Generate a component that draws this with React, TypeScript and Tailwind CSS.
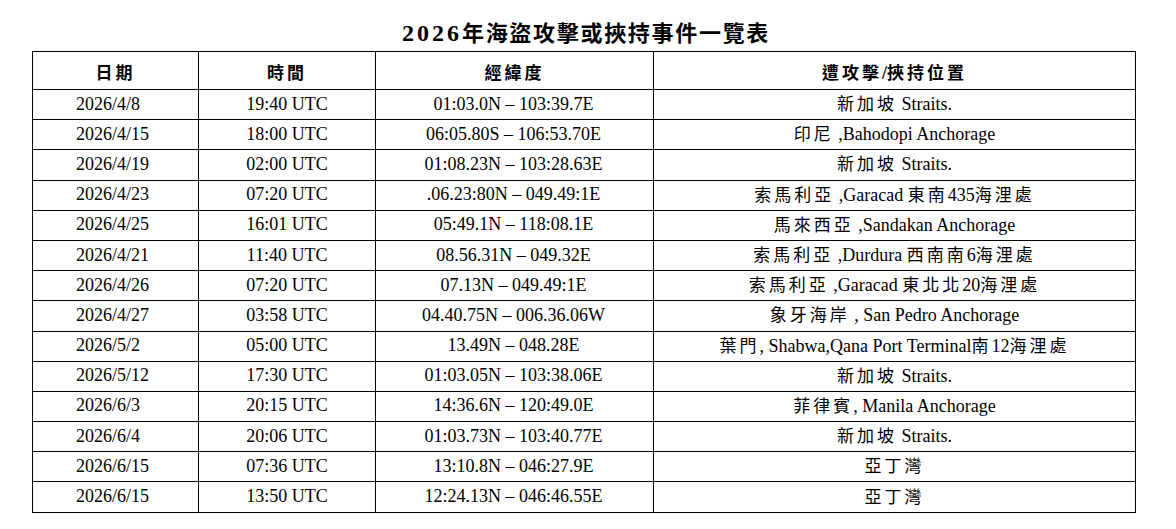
import React from "react";

const rows: [string, string, string, string][] = [
  ["2026/4/8", "19:40 UTC", "01:03.0N – 103:39.7E", "新加坡 Straits."],
  ["2026/4/15", "18:00 UTC", "06:05.80S – 106:53.70E", "印尼 ,Bahodopi Anchorage"],
  ["2026/4/19", "02:00 UTC", "01:08.23N – 103:28.63E", "新加坡 Straits."],
  ["2026/4/23", "07:20 UTC", ".06.23:80N – 049.49:1E", "索馬利亞 ,Garacad 東南435海浬處"],
  ["2026/4/25", "16:01 UTC", "05:49.1N – 118:08.1E", "馬來西亞 ,Sandakan Anchorage"],
  ["2026/4/21", "11:40 UTC", "08.56.31N – 049.32E", "索馬利亞 ,Durdura 西南南6海浬處"],
  ["2026/4/26", "07:20 UTC", "07.13N – 049.49:1E", "索馬利亞 ,Garacad 東北北20海浬處"],
  ["2026/4/27", "03:58 UTC", "04.40.75N – 006.36.06W", "象牙海岸 , San Pedro Anchorage"],
  ["2026/5/2", "05:00 UTC", "13.49N – 048.28E", "葉門, Shabwa,Qana Port Terminal南12海浬處"],
  ["2026/5/12", "17:30 UTC", "01:03.05N – 103:38.06E", "新加坡 Straits."],
  ["2026/6/3", "20:15 UTC", "14:36.6N – 120:49.0E", "菲律賓, Manila Anchorage"],
  ["2026/6/4", "20:06 UTC", "01:03.73N – 103:40.77E", "新加坡 Straits."],
  ["2026/6/15", "07:36 UTC", "13:10.8N – 046:27.9E", "亞丁灣"],
  ["2026/6/15", "13:50 UTC", "12:24.13N – 046:46.55E", "亞丁灣"],
];

const serif = "font-['Liberation_Serif','Noto_Sans_CJK_TC',serif]";

function Mixed({ text, bold = false }: { text: string; bold?: boolean }) {
  const parts = text.split(/([\u3400-\u9fff\uf900-\ufaff]+)/);
  return (
    <span className="whitespace-pre">
      {parts.map((p, i) =>
        i % 2 === 1 ? (
          <span
            key={i}
            className={
              bold
                ? "font-['Noto_Sans_CJK_TC',sans-serif] text-[17px] font-bold tracking-[3px]"
                : "font-['Noto_Sans_CJK_TC',sans-serif] text-[17px] font-normal tracking-[3px]"
            }
          >
            {p}
          </span>
        ) : (
          <span key={i}>{p}</span>
        )
      )}
    </span>
  );
}

export default function App() {
  const cell = "border-r border-b border-black flex items-center";
  return (
    <div className={`w-[1176px] h-[529px] bg-white overflow-hidden text-black ${serif}`}>
      <div className="h-[51px] pt-[14px] flex items-center justify-center pr-[4px]">
        <span className="font-bold leading-none whitespace-pre">
          <span className="font-['Liberation_Serif',serif] text-[24px] tracking-[3px]">2026</span>
          <span className="font-['Noto_Sans_CJK_TC',sans-serif] text-[22px] tracking-[1.7px]">
            年海盜攻擊或挾持事件一覽表
          </span>
        </span>
      </div>
      <div className="ml-[32px] w-[1104px] border-t border-l border-black">
        <div className="grid grid-cols-[166px_177px_278px_482px] h-[38px]">
          <div className={`${cell} justify-center pt-[4px]`}>
            <Mixed text="日期" bold />
          </div>
          <div className={`${cell} justify-center pt-[4px]`}>
            <Mixed text="時間" bold />
          </div>
          <div className={`${cell} justify-center pt-[4px]`}>
            <Mixed text="經緯度" bold />
          </div>
          <div className={`${cell} justify-center pt-[4px] font-bold text-[18px]`}>
            <Mixed text="遭攻擊/挾持位置" bold />
          </div>
        </div>
        {rows.map((r, i) => (
          <div key={i} className="grid grid-cols-[166px_177px_278px_482px] h-[30.2px] text-[18px] leading-none">
            <div className={`${cell} pl-[43px] pb-[2px]`}>{r[0]}</div>
            <div className={`${cell} justify-center pb-[2px]`}>{r[1]}</div>
            <div className={`${cell} justify-center pb-[2px] pr-[2px]`}>{r[2]}</div>
            <div className={`${cell} justify-center pb-[2px]`}>
              <Mixed text={r[3]} />
            </div>
          </div>
        ))}
      </div>
    </div>
  );
}
